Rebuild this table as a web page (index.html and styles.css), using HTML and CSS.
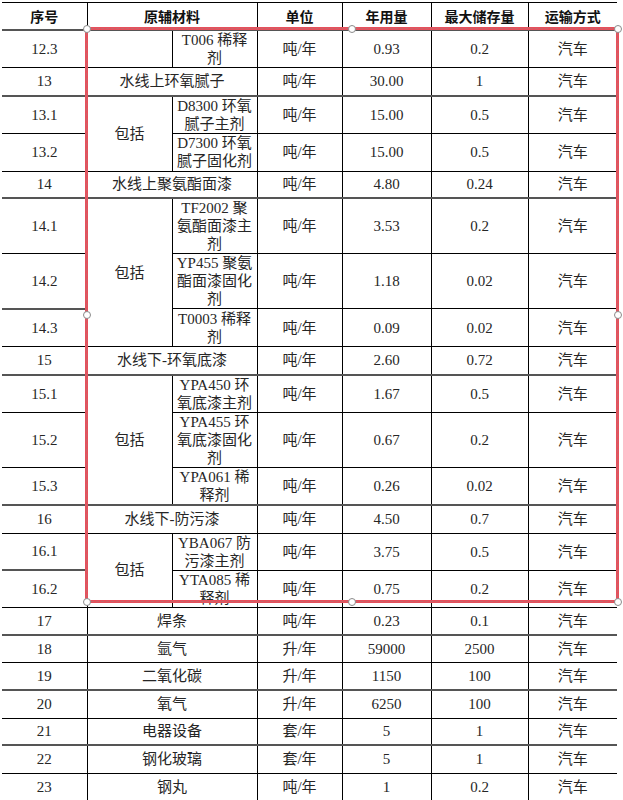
FILE: index.html
```html
<!DOCTYPE html>
<html lang="zh">
<head>
<meta charset="utf-8">
<title>原辅材料</title>
<link rel="stylesheet" href="styles.css">
</head>
<body>
<div class="page">
  <table class="mat">
    <colgroup>
      <col class="c1"><col class="c2"><col class="c3"><col class="c4"><col class="c5"><col class="c6"><col class="c7">
    </colgroup>
    <thead>
      <tr class="h27">
        <th>序号</th><th colspan="2">原辅材料</th><th>单位</th><th>年用量</th><th>最大储存量</th><th>运输方式</th>
      </tr>
    </thead>
    <tbody>
      <tr class="h38 thick"><td>12.3</td><td></td><td class="sub">T006 稀释剂</td><td>吨/年</td><td>0.93</td><td>0.2</td><td>汽车</td></tr>
      <tr class="h28"><td>13</td><td colspan="2">水线上环氧腻子</td><td>吨/年</td><td>30.00</td><td>1</td><td>汽车</td></tr>
      <tr class="h37 thick"><td>13.1</td><td rowspan="2">包括</td><td class="sub">D8300 环氧腻子主剂</td><td>吨/年</td><td>15.00</td><td>0.5</td><td>汽车</td></tr>
      <tr class="h38"><td>13.2</td><td class="sub">D7300 环氧腻子固化剂</td><td>吨/年</td><td>15.00</td><td>0.5</td><td>汽车</td></tr>
      <tr class="h27"><td>14</td><td colspan="2">水线上聚氨酯面漆</td><td>吨/年</td><td>4.80</td><td>0.24</td><td>汽车</td></tr>
      <tr class="h55 thick"><td>14.1</td><td rowspan="3">包括</td><td class="sub">TF2002 聚氨酯面漆主剂</td><td>吨/年</td><td>3.53</td><td>0.2</td><td>汽车</td></tr>
      <tr class="h55"><td>14.2</td><td class="sub">YP455 聚氨酯面漆固化剂</td><td>吨/年</td><td>1.18</td><td>0.02</td><td>汽车</td></tr>
      <tr class="h38"><td class="thick-cell">14.3</td><td class="sub">T0003 稀释剂</td><td>吨/年</td><td>0.09</td><td>0.02</td><td>汽车</td></tr>
      <tr class="h28"><td>15</td><td colspan="2">水线下-环氧底漆</td><td>吨/年</td><td>2.60</td><td>0.72</td><td>汽车</td></tr>
      <tr class="h38 thick"><td>15.1</td><td rowspan="3">包括</td><td class="sub">YPA450 环氧底漆主剂</td><td>吨/年</td><td>1.67</td><td>0.5</td><td>汽车</td></tr>
      <tr class="h55"><td>15.2</td><td class="sub">YPA455 环氧底漆固化剂</td><td>吨/年</td><td>0.67</td><td>0.2</td><td>汽车</td></tr>
      <tr class="h37"><td>15.3</td><td class="sub">YPA061 稀释剂</td><td>吨/年</td><td>0.26</td><td>0.02</td><td>汽车</td></tr>
      <tr class="h28 thick"><td>16</td><td colspan="2">水线下-防污漆</td><td>吨/年</td><td>4.50</td><td>0.7</td><td>汽车</td></tr>
      <tr class="h37"><td>16.1</td><td rowspan="2">包括</td><td class="sub">YBA067 防污漆主剂</td><td>吨/年</td><td>3.75</td><td>0.5</td><td>汽车</td></tr>
      <tr class="h37"><td class="thick-cell">16.2</td><td class="sub">YTA085 稀释剂</td><td>吨/年</td><td>0.75</td><td>0.2</td><td>汽车</td></tr>
      <tr class="h28"><td>17</td><td colspan="2">焊条</td><td>吨/年</td><td>0.23</td><td>0.1</td><td>汽车</td></tr>
      <tr class="h27 thick"><td>18</td><td colspan="2">氩气</td><td>升/年</td><td>59000</td><td>2500</td><td>汽车</td></tr>
      <tr class="h28"><td>19</td><td colspan="2">二氧化碳</td><td>升/年</td><td>1150</td><td>100</td><td>汽车</td></tr>
      <tr class="h28 thick"><td>20</td><td colspan="2">氧气</td><td>升/年</td><td>6250</td><td>100</td><td>汽车</td></tr>
      <tr class="h27"><td>21</td><td colspan="2">电器设备</td><td>套/年</td><td>5</td><td>1</td><td>汽车</td></tr>
      <tr class="h28 thick"><td>22</td><td colspan="2">钢化玻璃</td><td>套/年</td><td>5</td><td>1</td><td>汽车</td></tr>
      <tr class="h27"><td>23</td><td colspan="2">钢丸</td><td>吨/年</td><td>1</td><td>0.2</td><td>汽车</td></tr>
    </tbody>
  </table>

  <div class="selection">
    <span class="handle tl"></span><span class="handle tm"></span><span class="handle tr"></span>
    <span class="handle ml"></span><span class="handle mr"></span>
    <span class="handle bl"></span><span class="handle bm"></span><span class="handle br"></span>
  </div>
</div>
</body>
</html>
```

FILE: styles.css
```css
html, body {
  margin: 0;
  padding: 0;
  background: #fff;
}

.page {
  position: relative;
  width: 623px;
  height: 800px;
  padding: 2px 0 0 2px;
  box-sizing: border-box;
  overflow: hidden;
}

.mat {
  border-collapse: collapse;
  table-layout: fixed;
  width: 615px;
  font-family: "Liberation Serif", "Noto Sans CJK SC", serif;
  font-size: 15px;
  line-height: 18px;
  color: #262626;
}

.c1 { width: 85px; }
.c2 { width: 85px; }
.c3 { width: 85px; }
.c4 { width: 85px; }
.c5 { width: 89px; }
.c6 { width: 97px; }
.c7 { width: 89px; }

.mat th,
.mat td {
  border: 1px solid #000;
  padding: 0 4px;
  text-align: center;
  vertical-align: middle;
  overflow: hidden;
}

.mat tr > :first-child { border-left: none; }
.mat tr > :last-child { border-right: none; }

.mat th {
  font-family: "Noto Sans CJK SC", sans-serif;
  font-weight: bold;
  font-size: 14px;
  color: #111;
  border-bottom: 2px solid #555;
}

.mat td.sub {
  padding: 0 4px;
}

.mat tr.thick > td { border-top: 2px solid #555; }
.mat td.thick-cell { border-top: 2px solid #555; }

.h27 { height: 27px; }
.h28 { height: 28px; }
.h37 { height: 37px; }
.h38 { height: 38px; }
.h55 { height: 55px; }

/* selection overlay */
.selection {
  position: absolute;
  left: 85px;
  top: 27px;
  width: 534px;
  height: 576px;
  box-sizing: border-box;
  border: 3px solid #e6505c;
  pointer-events: none;
}

.selection::after {
  content: "";
  position: absolute;
  inset: -2px;
  border: 1px dashed rgba(170, 120, 120, 0.55);
}

.handle {
  position: absolute;
  width: 8px;
  height: 8px;
  border-radius: 50%;
  background: #fff;
  border: 1px solid #8a8a8a;
  box-sizing: border-box;
  z-index: 2;
}

.tl { left: -5.5px; top: -5.5px; }
.tm { left: calc(50% - 4px); top: -5.5px; }
.tr { right: -5.5px; top: -5.5px; }
.ml { left: -5.5px; top: calc(50% - 4px); }
.mr { right: -5.5px; top: calc(50% - 4px); }
.bl { left: -5.5px; bottom: -5.5px; }
.bm { left: calc(50% - 4px); bottom: -5.5px; }
.br { right: -5.5px; bottom: -5.5px; }
```
